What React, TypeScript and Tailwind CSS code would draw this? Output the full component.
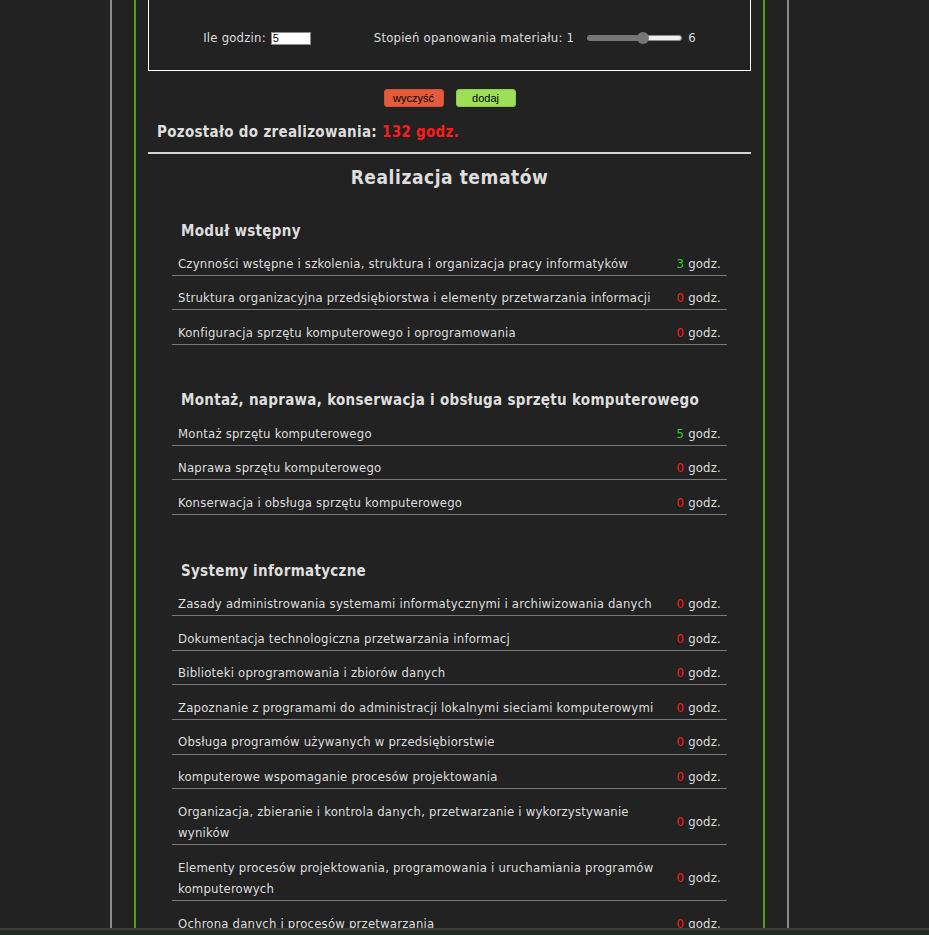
import React from "react";

type Row = { t: string; n: number };
type Section = { title: string; rows: Row[]; wrap: string; head: string };

const sections: Section[] = [
  {
    title: "Moduł wstępny",
    wrap: "mt-[33px]",
    head: "",
    rows: [
      { t: "Czynności wstępne i szkolenia, struktura i organizacja pracy informatyków", n: 3 },
      { t: "Struktura organizacyjna przedsiębiorstwa i elementy przetwarzania informacji", n: 0 },
      { t: "Konfiguracja sprzętu komputerowego i oprogramowania", n: 0 },
    ],
  },
  {
    title: "Montaż, naprawa, konserwacja i obsługa sprzętu komputerowego",
    wrap: "mt-[46px]",
    head: "pb-[1.5px]",
    rows: [
      { t: "Montaż sprzętu komputerowego", n: 5 },
      { t: "Naprawa sprzętu komputerowego", n: 0 },
      { t: "Konserwacja i obsługa sprzętu komputerowego", n: 0 },
    ],
  },
  {
    title: "Systemy informatyczne",
    wrap: "mt-[47px]",
    head: "pb-[0.5px]",
    rows: [
      { t: "Zasady administrowania systemami informatycznymi i archiwizowania danych", n: 0 },
      { t: "Dokumentacja technologiczna przetwarzania informacj", n: 0 },
      { t: "Biblioteki oprogramowania i zbiorów danych", n: 0 },
      { t: "Zapoznanie z programami do administracji lokalnymi sieciami komputerowymi", n: 0 },
      { t: "Obsługa programów używanych w przedsiębiorstwie", n: 0 },
      { t: "komputerowe wspomaganie procesów projektowania", n: 0 },
      { t: "Organizacja, zbieranie i kontrola danych, przetwarzanie i wykorzystywanie wyników", n: 0 },
      { t: "Elementy procesów projektowania, programowania i uruchamiania programów komputerowych", n: 0 },
      { t: "Ochrona danych i procesów przetwarzania", n: 0 },
      { t: "Bezpieczeństwo i higiena pracy", n: 0 },
    ],
  },
];

export default function App() {
  return (
    <div className="relative h-[935px] overflow-hidden bg-[#222222] text-[#dedede] tracking-[0.2px] font-['DejaVu_Sans_Condensed','DejaVu_Sans',sans-serif]">
      <div className="w-[899px] h-full">
        <div className="mx-auto w-[679px] h-full border-x-2 border-[#8c8c8c] px-[22px]">
          <div className="h-full border-x-2 border-[#5a9a1c] px-[12px]">
            {/* form panel */}
            <div className="h-[71px] border-x border-b border-white pt-[6px] flex items-center justify-center text-[13px] leading-[18px]">
              <div className="flex items-center">
                <span>Ile godzin:</span>
                <div className="ml-[5px] w-[40px] h-[13px] bg-white border border-[#8a8a8a] text-black text-[11px] leading-[11px] pl-[1px] tracking-normal font-['Liberation_Sans',sans-serif]">
                  5
                </div>
              </div>
              <div className="ml-[63px] flex items-center">
                <span>Stopień opanowania materiału: 1</span>
                <div className="relative ml-[13px] w-[95px] h-[6px] flex">
                  <div className="w-[56px] h-[6px] rounded-l-full bg-[#777777]" />
                  <div className="flex-1 h-[6px] rounded-r-full bg-[#efefef] border border-[#8a8a8a]" />
                  <div className="absolute left-[50px] top-[-3px] w-[12px] h-[12px] rounded-full bg-[#777777]" />
                </div>
                <span className="ml-[6px]">6</span>
              </div>
            </div>

            {/* buttons */}
            <div className="mt-[18px] flex justify-center gap-[12px] font-['Liberation_Sans',sans-serif] tracking-normal text-[11px] text-black">
              <button className="w-[60px] h-[18px] rounded-[3px] bg-[#e35b3b] border border-[#c9533a] leading-[16px]">
                wyczyść
              </button>
              <button className="w-[60px] h-[18px] rounded-[3px] bg-[#9de058] border border-[#8ccb4e] leading-[16px]">
                dodaj
              </button>
            </div>

            <div className="mt-[15px] pl-[9px] text-[15px] leading-[20px] font-bold tracking-[0.3px]">
              Pozostało do zrealizowania: <span className="text-[#ff1a1a]">132 godz.</span>
            </div>

            <div className="mt-[10px] h-[2px] bg-[#d4d4d4]" />

            <h2 className="mt-[11px] text-center text-[19px] leading-[24px] font-bold tracking-[0.55px]">
              Realizacja tematów
            </h2>

            {sections.map((s) => (
              <div key={s.title} className={`mx-[24px] ${s.wrap}`}>
                <div className={`pl-[9px] text-[15px] leading-[19px] font-bold tracking-[0.3px] ${s.head}`}>
                  {s.title}
                </div>
                {s.rows.map((r) => (
                  <div
                    key={r.t}
                    className="flex items-center justify-between border-b border-[#7a7a7a] px-[6px] pt-[11.5px] pb-[0.65px] text-[13px] leading-[21.45px]"
                  >
                    <div className="max-w-[485px]">{r.t}</div>
                    <div className="whitespace-nowrap">
                      <span className={r.n > 0 ? "text-[#2fd12f]" : "text-[#ff1a1a]"}>{r.n}</span> godz.
                    </div>
                  </div>
                ))}
              </div>
            ))}
          </div>
        </div>
      </div>
      <div className="absolute left-0 right-0 bottom-0 h-[7px] border-t-2 border-[#3b3b3b] bg-[#1e2c22]" />
    </div>
  );
}
